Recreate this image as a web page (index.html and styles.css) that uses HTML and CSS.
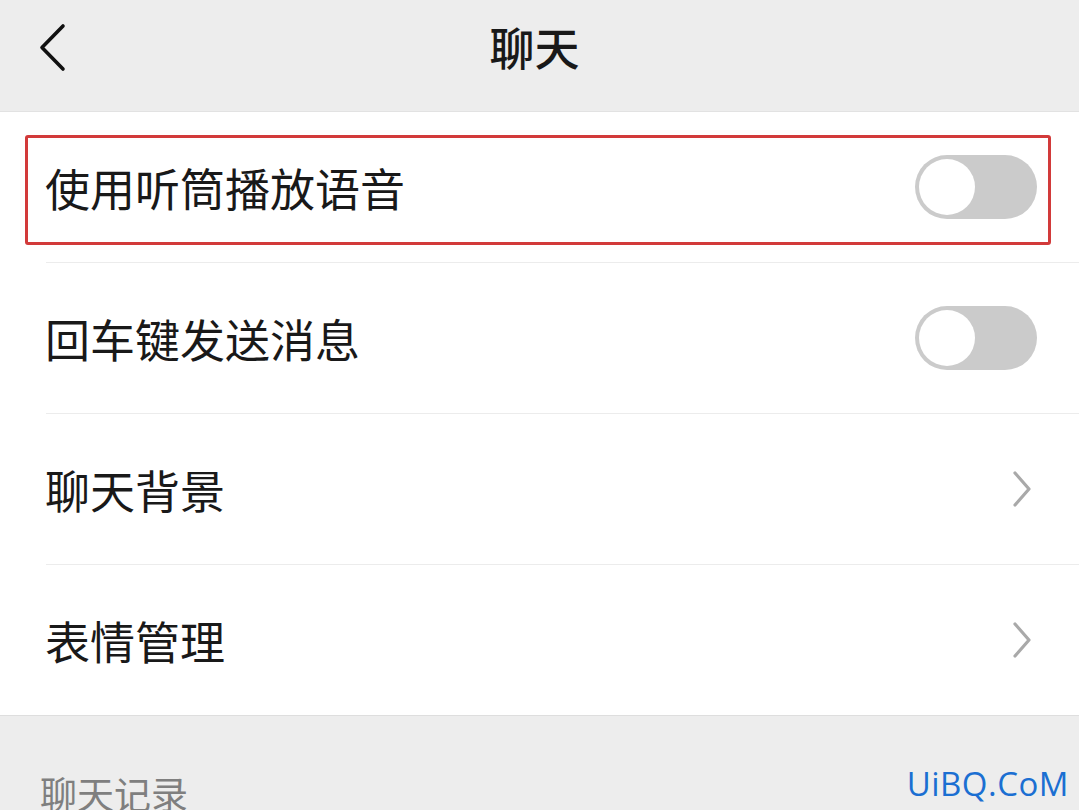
FILE: index.html
```html
<!DOCTYPE html>
<html lang="zh-CN">

<head>
    <meta charset="UTF-8">
    <meta name="viewport" content="width=device-width, initial-scale=1.0">
    <title>聊天</title>
    <link rel="stylesheet" href="styles.css">
</head>

<body>
    <header class="top-bar">
        <button class="back-btn" aria-label="返回">
            <svg width="30" height="50" viewBox="0 0 30 50">
                <path d="M24 3 L3 24.5 L24 46" fill="none" stroke="#111" stroke-width="3.6" stroke-linecap="round" stroke-linejoin="round"/>
            </svg>
        </button>
        <h1 class="title">聊天</h1>
    </header>

    <main class="list">
        <!-- highlight annotation -->
        <div class="highlight"></div>

        <div class="row">
            <span class="label">使用听筒播放语音</span>
            <span class="switch"><span class="knob"></span></span>
        </div>
        <div class="row">
            <span class="label">回车键发送消息</span>
            <span class="switch"><span class="knob"></span></span>
        </div>
        <div class="row">
            <span class="label">聊天背景</span>
            <svg class="chevron" width="22" height="38" viewBox="0 0 22 38">
                <path d="M4 3 L18 19 L4 35" fill="none" stroke="#a9a9a9" stroke-width="3.2" stroke-linecap="round" stroke-linejoin="round"/>
            </svg>
        </div>
        <div class="row">
            <span class="label">表情管理</span>
            <svg class="chevron" width="22" height="38" viewBox="0 0 22 38">
                <path d="M4 3 L18 19 L4 35" fill="none" stroke="#a9a9a9" stroke-width="3.2" stroke-linecap="round" stroke-linejoin="round"/>
            </svg>
        </div>
    </main>

    <section class="group">
        <h2 class="group-title">聊天记录</h2>
    </section>

    <div class="watermark">UiBQ.CoM</div>
</body>

</html>
```

FILE: styles.css
```css
body {
    margin: 0;
    padding: 0;
    height: 810px;
    overflow: hidden;
    background-color: #ededed;
    font-family: "Noto Sans CJK SC", "Noto Sans", sans-serif;
    color: #191919;
    position: relative;
}

.top-bar {
    height: 111px;
    border-bottom: 1px solid #e2e2e2;
    display: flex;
    align-items: center;
    justify-content: center;
    position: relative;
}

.back-btn {
    position: absolute;
    left: 39px;
    top: 23px;
    padding: 0;
    border: none;
    background: none;
}

.back-btn svg {
    display: block;
}

.title {
    margin: 0 10px 18px 0;
    font-size: 45px;
    font-weight: 500;
    color: #191919;
}

.list {
    position: relative;
    background-color: #fff;
    border-bottom: 1px solid #dedede;
}

.highlight {
    position: absolute;
    left: 25px;
    top: 23px;
    width: 1020px;
    height: 104px;
    border: 3px solid #d23a3a;
    border-radius: 3px;
}

.row {
    height: 150px;
    margin-left: 46px;
    padding-right: 42px;
    display: flex;
    align-items: center;
    justify-content: space-between;
    border-bottom: 1px solid #ececec;
}

.row:last-child {
    height: 150px;
    border-bottom: none;
}

.label {
    font-size: 45px;
    margin-left: -1px;
}

.switch {
    width: 122px;
    height: 64px;
    border-radius: 32px;
    background-color: #cbcbcb;
    display: flex;
    align-items: center;
    padding-left: 4px;
    box-sizing: border-box;
}

.knob {
    width: 56px;
    height: 56px;
    border-radius: 50%;
    background-color: #fff;
}

.chevron {
    margin-right: 4px;
}

.group {
    padding: 55px 0 0 40px;
}

.group-title {
    margin: 0;
    font-size: 37px;
    font-weight: 400;
    color: #7f7f7f;
    line-height: 1.2;
}

.watermark {
    position: absolute;
    right: 10px;
    bottom: 4px;
    font-family: "Open Sans", sans-serif;
    font-size: 33px;
    color: #1b6fd2;
    letter-spacing: 0.5px;
}
```
